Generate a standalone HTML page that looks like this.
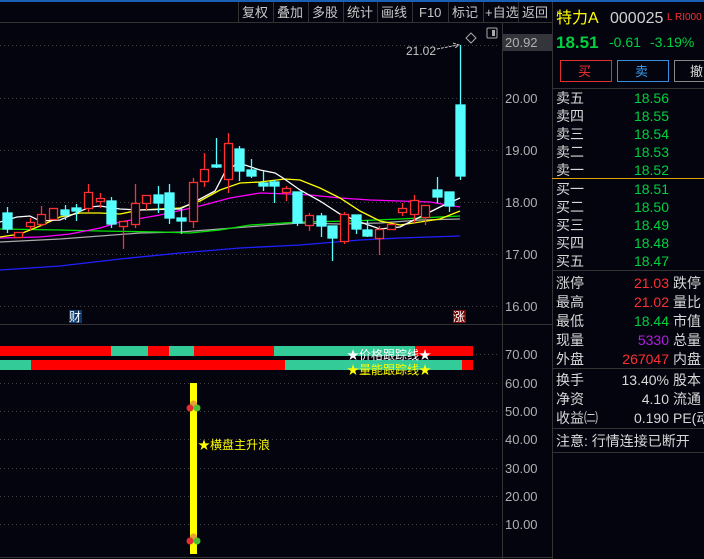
<!DOCTYPE html><html><head><meta charset="utf-8"><style>
body{margin:0;background:#03040e;width:704px;height:559px;overflow:hidden}
svg{display:block}
text{font-family:"Liberation Sans","Noto Sans CJK SC",sans-serif}
</style></head><body>
<svg width="704" height="559" viewBox="0 0 704 559" xmlns="http://www.w3.org/2000/svg">
<rect width="704" height="559" fill="#03040e"/>
<rect x="0" y="0" width="704" height="2" fill="#1a5fb4"/>
<g stroke="#333" stroke-width="1">
<line x1="0" y1="22.5" x2="552" y2="22.5"/>
<line x1="238.5" y1="2" x2="238.5" y2="22"/><line x1="273.5" y1="2" x2="273.5" y2="22"/><line x1="308.5" y1="2" x2="308.5" y2="22"/><line x1="343.5" y1="2" x2="343.5" y2="22"/><line x1="377.5" y1="2" x2="377.5" y2="22"/><line x1="412.5" y1="2" x2="412.5" y2="22"/><line x1="448.5" y1="2" x2="448.5" y2="22"/><line x1="483.5" y1="2" x2="483.5" y2="22"/><line x1="518.5" y1="2" x2="518.5" y2="22"/>
<line x1="502.5" y1="22" x2="502.5" y2="559"/>
<line x1="552.5" y1="2" x2="552.5" y2="559"/>
<line x1="0" y1="324.5" x2="552" y2="324.5"/>
<line x1="0" y1="557.5" x2="552" y2="557.5"/>
</g>
<g fill="#c8c8c8" font-size="13">
<text x="242" y="17">复权</text><text x="277" y="17">叠加</text><text x="312" y="17">多股</text><text x="347" y="17">统计</text><text x="381" y="17">画线</text><text x="419" y="17">F10</text><text x="452" y="17">标记</text><text x="485" y="17">+自选</text><text x="522" y="17">返回</text>
</g>
<g stroke="#444" stroke-dasharray="1,3">
<line x1="0" y1="45.5" x2="500" y2="45.5"/><line x1="0" y1="98.5" x2="500" y2="98.5"/><line x1="0" y1="150.5" x2="500" y2="150.5"/><line x1="0" y1="202.5" x2="500" y2="202.5"/><line x1="0" y1="254.5" x2="500" y2="254.5"/><line x1="0" y1="306.5" x2="500" y2="306.5"/>
<line x1="0" y1="354.5" x2="500" y2="354.5"/><line x1="0" y1="383.5" x2="500" y2="383.5"/><line x1="0" y1="411.5" x2="500" y2="411.5"/><line x1="0" y1="439.5" x2="500" y2="439.5"/><line x1="0" y1="468.5" x2="500" y2="468.5"/><line x1="0" y1="496.5" x2="500" y2="496.5"/><line x1="0" y1="524.5" x2="500" y2="524.5"/>
</g>
<rect x="503" y="34" width="49" height="17" fill="#33353b"/>
<g fill="#b0b0b0" font-size="13">
<text x="505" y="47">20.92</text><text x="505" y="103">20.00</text><text x="505" y="155">19.00</text><text x="505" y="207">18.00</text><text x="505" y="259">17.00</text><text x="505" y="311">16.00</text>
<text x="505" y="359">70.00</text><text x="505" y="388">60.00</text><text x="505" y="416">50.00</text><text x="505" y="444">40.00</text><text x="505" y="473">30.00</text><text x="505" y="501">20.00</text><text x="505" y="529">10.00</text>
</g>
<path d="M471 33l5 5-5 5-5-5z" fill="none" stroke="#aaa"/>
<rect x="487" y="28" width="10" height="10" rx="1" fill="none" stroke="#aaa"/><rect x="492" y="30" width="3" height="6" fill="#aaa"/>
<text x="406" y="55" fill="#c8c8c8" font-size="12">21.02</text>
<path d="M437 49 L458 45 M453 43 L459 45 L455 48" stroke="#ccc" fill="none" stroke-dasharray="3,1"/>
<g fill="none" stroke-width="1.3">
<polyline stroke="#2020ff" points="0,270 60,266 120,259 180,253 240,248 300,245 360,240 400,238 460,236"/>
<polyline stroke="#aaa" points="0,242 60,239 100,236 140,233 180,232 220,229 260,226 300,223 340,224 380,223 420,220 460,219"/>
<polyline stroke="#00e000" points="0,229 60,230 100,231 160,232 190,233 220,230 250,225 300,222 350,221 400,219 440,217 460,216"/>
<polyline stroke="#ff00ff" points="0,238 40,237 70,234 100,228 120,222 160,215 200,206 230,198 260,193 290,194 310,195 340,198 370,200 400,201 430,202 460,207"/>
<polyline stroke="#ffff00" points="0,237 20,234 40,226 60,217 80,213 100,213 120,214 140,210 160,209 180,208 200,201 220,190 240,183 260,182 285,179 300,180 320,188 340,198 360,211 380,221 400,225 420,222 440,219 460,211"/>
<polyline stroke="#fff" points="0,222 17,217 30,216 40,221 60,220 90,207 100,206 120,209 140,210 180,209 200,199 215,191 225,172 235,165 245,165 260,170 275,173 283,178 300,190 320,201 340,214 360,222 380,229 400,227 420,217 440,207 460,198"/>
</g>
<g stroke-width="1.3">
<g stroke="#55ffff" fill="#55ffff">
<line x1="7.5" y1="207" x2="7.5" y2="233"/><rect x="3" y="213" width="9" height="16"/>
<line x1="65.5" y1="205" x2="65.5" y2="220"/><rect x="61" y="210" width="8" height="5"/>
<line x1="76.5" y1="204" x2="76.5" y2="221"/><rect x="72" y="208" width="9" height="3"/>
<line x1="111.5" y1="197" x2="111.5" y2="228"/><rect x="107" y="201" width="9" height="23"/>
<line x1="158.5" y1="186" x2="158.5" y2="213"/><rect x="154" y="195" width="9" height="8"/>
<line x1="169.5" y1="184" x2="169.5" y2="224"/><rect x="165" y="193" width="9" height="25"/>
<line x1="181.5" y1="207" x2="181.5" y2="234"/><rect x="177" y="218" width="9" height="3"/>
<line x1="216.5" y1="138" x2="216.5" y2="168"/><rect x="212" y="165" width="9" height="2"/>
<line x1="239.5" y1="146" x2="239.5" y2="181"/><rect x="235" y="149" width="9" height="22"/>
<line x1="251.5" y1="159" x2="251.5" y2="178"/><rect x="247" y="170" width="9" height="6"/>
<line x1="263.5" y1="171" x2="263.5" y2="191"/><rect x="259" y="183" width="9" height="3"/>
<line x1="274.5" y1="180" x2="274.5" y2="203"/><rect x="270" y="182" width="9" height="4"/>
<line x1="297.5" y1="192" x2="297.5" y2="226"/><rect x="293" y="192" width="9" height="31"/>
<line x1="321.5" y1="213" x2="321.5" y2="237"/><rect x="317" y="216" width="9" height="10"/>
<line x1="332.5" y1="226" x2="332.5" y2="261"/><rect x="328" y="226" width="9" height="12"/>
<line x1="356.5" y1="215" x2="356.5" y2="234"/><rect x="352" y="215" width="9" height="14"/>
<line x1="367.5" y1="220" x2="367.5" y2="237"/><rect x="363" y="230" width="9" height="6"/>
<line x1="437.5" y1="177" x2="437.5" y2="203"/><rect x="433" y="190" width="9" height="7"/>
<line x1="449.5" y1="192" x2="449.5" y2="212"/><rect x="445" y="192" width="9" height="14"/>
<line x1="460.5" y1="45" x2="460.5" y2="180"/><rect x="456" y="105" width="9" height="71"/>
</g>
<g stroke="#ff3030" fill="#03040e">
<rect x="14.5" y="232.5" width="8" height="5"/>
<line x1="30.5" y1="218" x2="30.5" y2="230"/><rect x="26.5" y="222.5" width="8" height="4"/>
<line x1="41.5" y1="206" x2="41.5" y2="226"/><rect x="37.5" y="214.5" width="8" height="10"/>
<rect x="49.5" y="208.5" width="8" height="11"/>
<line x1="88.5" y1="184" x2="88.5" y2="212"/><rect x="84.5" y="192.5" width="8" height="16"/>
<line x1="100.5" y1="193" x2="100.5" y2="208"/><rect x="96.5" y="198.5" width="8" height="3"/>
<line x1="123.5" y1="221" x2="123.5" y2="249"/><rect x="119.5" y="221.5" width="8" height="5"/>
<line x1="135.5" y1="184" x2="135.5" y2="228"/><rect x="131.5" y="203.5" width="8" height="21"/>
<line x1="146.5" y1="195" x2="146.5" y2="210"/><rect x="142.5" y="195.5" width="8" height="8"/>
<line x1="193.5" y1="178" x2="193.5" y2="228"/><rect x="189.5" y="182.5" width="8" height="39"/>
<line x1="204.5" y1="153" x2="204.5" y2="187"/><rect x="200.5" y="169.5" width="8" height="12"/>
<line x1="228.5" y1="133" x2="228.5" y2="193"/><rect x="224.5" y="143.5" width="8" height="36"/>
<line x1="286.5" y1="186" x2="286.5" y2="201"/><rect x="282.5" y="188.5" width="8" height="4"/>
<line x1="309.5" y1="213" x2="309.5" y2="231"/><rect x="305.5" y="215.5" width="8" height="10"/>
<line x1="344.5" y1="212" x2="344.5" y2="244"/><rect x="340.5" y="214.5" width="8" height="27"/>
<line x1="379.5" y1="226" x2="379.5" y2="255"/><rect x="375.5" y="229.5" width="8" height="9"/>
<rect x="387.5" y="224.5" width="8" height="5"/>
<line x1="402.5" y1="203" x2="402.5" y2="216"/><rect x="398.5" y="208.5" width="8" height="4"/>
<line x1="414.5" y1="195" x2="414.5" y2="223"/><rect x="410.5" y="200.5" width="8" height="14"/>
<line x1="425.5" y1="205" x2="425.5" y2="225"/><rect x="421.5" y="205.5" width="8" height="12"/>
</g>
</g>
<rect x="69" y="310" width="13" height="13" fill="#0d3a6e"/><text x="69" y="321" fill="#fff" font-size="12">财</text>
<rect x="453" y="310" width="13" height="13" fill="#7a0a0a"/><text x="453" y="321" fill="#fff" font-size="12">涨</text>
<g>
<rect x="0" y="346" width="473" height="10" fill="#ff0000"/>
<rect x="111" y="346" width="37" height="10" fill="#33cc99"/><rect x="169" y="346" width="25" height="10" fill="#33cc99"/><rect x="274" y="346" width="141" height="10" fill="#33cc99"/>
<rect x="0" y="360" width="473" height="10" fill="#ff0000"/>
<rect x="0" y="360" width="31" height="10" fill="#33cc99"/><rect x="285" y="360" width="177" height="10" fill="#33cc99"/>
</g>
<text x="347" y="359" fill="#fff" font-size="12">★价格跟踪线★</text>
<text x="347" y="374" fill="#ffff00" font-size="12">★量能跟踪线★</text>
<rect x="190" y="383" width="7" height="171" fill="#ffff00"/>
<g><circle cx="193.5" cy="404" r="3.5" fill="#e8a030"/><circle cx="190" cy="408" r="3.5" fill="#e03030"/><circle cx="197" cy="408" r="3.5" fill="#50c030"/>
<circle cx="193.5" cy="537" r="3.5" fill="#e8a030"/><circle cx="190" cy="541" r="3.5" fill="#e03030"/><circle cx="197" cy="541" r="3.5" fill="#50c030"/></g>
<text x="198" y="449" fill="#ffff00" font-size="12">★横盘主升浪</text>
<text x="556" y="23" fill="#ffff00" font-size="16">特力A</text>
<text x="610" y="23" fill="#d0d0d0" font-size="16">000025</text>
<text x="667" y="20" fill="#ff3030" font-size="10">L RI000</text>
<text x="556" y="48" fill="#00d040" font-size="17" font-weight="bold">18.51</text>
<text x="609" y="47" fill="#00d040" font-size="14">-0.61</text><text x="650" y="47" fill="#00d040" font-size="14">-3.19%</text>
<rect x="560.5" y="60.5" width="51" height="21" fill="none" stroke="#e03030"/><text x="578" y="76" fill="#ff3030" font-size="13">买</text>
<rect x="617.5" y="60.5" width="51" height="21" fill="none" stroke="#3a8ee0"/><text x="635" y="76" fill="#3a9ef0" font-size="13">卖</text>
<rect x="674.5" y="60.5" width="40" height="21" fill="none" stroke="#888"/><text x="690" y="76" fill="#ddd" font-size="13">撤</text>
<g stroke="#333"><line x1="552" y1="88.5" x2="704" y2="88.5"/><line x1="552" y1="270.5" x2="704" y2="270.5"/><line x1="552" y1="368.5" x2="704" y2="368.5"/><line x1="552" y1="428.5" x2="704" y2="428.5"/><line x1="552" y1="452.5" x2="704" y2="452.5"/></g>
<line x1="552" y1="178.5" x2="704" y2="178.5" stroke="#e0a000"/>
<g font-size="14" fill="#d8d8d8">
<text x="556" y="103">卖五</text><text x="556" y="121">卖四</text><text x="556" y="139">卖三</text><text x="556" y="157">卖二</text><text x="556" y="175">卖一</text>
<text x="556" y="194">买一</text><text x="556" y="212">买二</text><text x="556" y="230">买三</text><text x="556" y="248">买四</text><text x="556" y="266">买五</text>
<text x="556" y="288">涨停</text><text x="556" y="307">最高</text><text x="556" y="326">最低</text><text x="556" y="345">现量</text><text x="556" y="364">外盘</text>
<text x="556" y="385">换手</text><text x="556" y="404">净资</text><text x="556" y="423">收益㈡</text>
<text x="556" y="446">注意: 行情连接已断开</text>
<text x="673" y="288">跌停</text><text x="673" y="307">量比</text><text x="673" y="326">市值</text><text x="673" y="345">总量</text><text x="673" y="364">内盘</text>
<text x="673" y="385">股本</text><text x="673" y="404">流通</text><text x="673" y="423">PE(动</text>
</g>
<g font-size="14" fill="#00d040" text-anchor="end">
<text x="669" y="103">18.56</text><text x="669" y="121">18.55</text><text x="669" y="139">18.54</text><text x="669" y="157">18.53</text><text x="669" y="175">18.52</text>
<text x="669" y="194">18.51</text><text x="669" y="212">18.50</text><text x="669" y="230">18.49</text><text x="669" y="248">18.48</text><text x="669" y="266">18.47</text>
<text x="669" y="326">18.44</text>
</g>
<g font-size="14" text-anchor="end">
<text x="669" y="288" fill="#ff3030">21.03</text><text x="669" y="307" fill="#ff3030">21.02</text>
<text x="669" y="345" fill="#b020e0">5330</text><text x="669" y="364" fill="#ff3030">267047</text>
<text x="669" y="385" fill="#d8d8d8">13.40%</text><text x="669" y="404" fill="#d8d8d8">4.10</text><text x="669" y="423" fill="#d8d8d8">0.190</text>
</g>
</svg>
</body></html>
